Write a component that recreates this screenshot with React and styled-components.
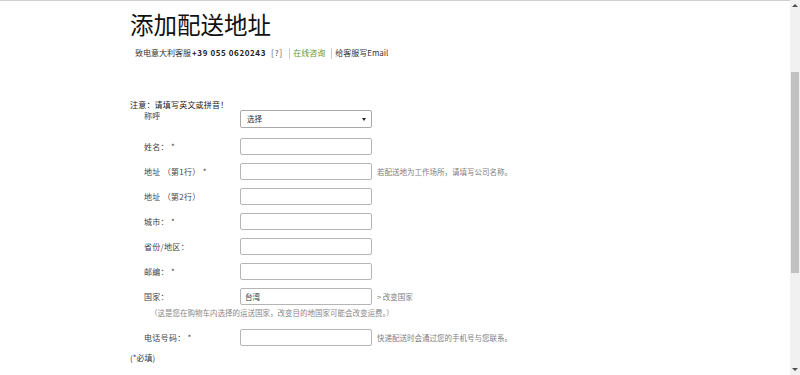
import React from 'react';
import styled, { createGlobalStyle } from 'styled-components';

const GlobalStyle = createGlobalStyle`
  html, body {
    margin: 0;
    padding: 0;
    overflow: hidden;
    background: #fff;
  }
  body {
    font-family: "Noto Sans CJK SC", "Noto Sans", "Liberation Sans", sans-serif;
    color: #333;
  }
`;

const Page = styled.div`
  display: flex;
  width: 800px;
  height: 375px;
`;

const Main = styled.div`
  flex: 1;
  border-top: 1px solid #cfcfcf;
  padding-left: 130px;
  box-sizing: border-box;
`;

const Title = styled.h1`
  margin: 8px 0 0;
  font-size: 23.5px;
  line-height: 30px;
  font-weight: 400;
  color: #111;
`;

const Contact = styled.div`
  display: flex;
  align-items: center;
  margin: 8px 0 0 5px;
  font-size: 8px;
  line-height: 12px;
  color: #333;
`;

const Phone = styled.b`
  font-weight: 700;
  color: #222;
  letter-spacing: 0.6px;
  margin-left: 1px;
`;

const Help = styled.span`
  margin-left: 5px;
  color: #555;
  letter-spacing: 1px;
`;

const LinkItem = styled.span`
  display: flex;
  align-items: center;
  margin-left: 6px;
  padding-left: 3px;
  border-left: 1px solid #ccc;
  height: 11px;
  color: ${p => (p.$green ? '#5e9b38' : '#333')};
`;

const Form = styled.div`
  margin-top: 40px;
  font-size: 8px;
  line-height: 12px;
`;

const Note = styled.div`
  color: #222;
  letter-spacing: 0.2px;
`;

const Row = styled.div`
  display: flex;
  align-items: ${p => (p.$top ? 'flex-start' : 'center')};
  margin-top: ${p => p.$mt}px;
  padding-left: 14px;
`;

const Label = styled.div`
  width: 96px;
  color: #444;
  letter-spacing: 0.3px;
  margin-top: ${p => p.$mt || 0}px;
`;

const Input = styled.div`
  box-sizing: border-box;
  width: 132px;
  height: ${p => p.$h || 17}px;
  border: 1px solid #b5b5b5;
  border-radius: 2px;
  background: #fff;
  display: flex;
  align-items: center;
  padding: 0 4px;
  color: #333;
  font-size: 7.5px;
`;

const SelectBox = styled(Input)`
  justify-content: space-between;
  border-color: #a9a9a9;
  padding: 0 5px 0 6px;
`;

const Arrow = styled.span`
  width: 0;
  height: 0;
  border-left: 2px solid transparent;
  border-right: 2px solid transparent;
  border-top: 3px solid #222;
`;

const Hint = styled.div`
  margin-left: 5px;
  color: #808080;
  font-size: 7.5px;
`;

const SubNote = styled.div`
  margin: 2px 0 0 20px;
  color: #888;
  font-size: 7.5px;
`;

const Required = styled.div`
  margin-top: 6px;
  color: #333;
`;

const Scrollbar = styled.div`
  width: 10px;
  background: #f1f1f1;
  display: flex;
  flex-direction: column;
  align-items: center;
`;

const ScrollArrow = styled.div`
  width: 0;
  height: 0;
  margin: ${p => (p.$down ? 'auto 0 4px' : '4px 0 0')};
  border-left: 3px solid transparent;
  border-right: 3px solid transparent;
  ${p => (p.$down ? 'border-top: 3px solid #505050;' : 'border-bottom: 3px solid #505050;')}
`;

const Thumb = styled.div`
  width: 8px;
  height: 201px;
  margin-top: 65px;
  background: #c1c1c1;
`;

const fields = [
  { label: '姓名： *', mt: 10 },
  { label: '地址 （第1行） *', mt: 8, hint: '若配送地为工作场所，请填写公司名称。' },
  { label: '地址 （第2行）', mt: 8 },
  { label: '城市： *', mt: 8 },
  { label: '省份/地区：', mt: 8 },
  { label: '邮编： *', mt: 8 },
];

export default function App() {
  return (
    <>
      <GlobalStyle />
      <Page>
        <Main>
          <Title>添加配送地址</Title>
          <Contact>
            <span>致电意大利客服</span>
            <Phone>+39 055 0620243</Phone>
            <Help>[?]</Help>
            <LinkItem $green>在线咨询</LinkItem>
            <LinkItem>给客服写Email</LinkItem>
          </Contact>
          <Form>
            <Note>注意：请填写英文或拼音！</Note>
            <Row $mt={-1} $top>
              <Label $mt={0}>称呼</Label>
              <SelectBox $h={18}>
                <span>选择</span>
                <Arrow />
              </SelectBox>
            </Row>
            {fields.map(f => (
              <Row key={f.label} $mt={f.mt}>
                <Label>{f.label}</Label>
                <Input />
                {f.hint && <Hint>{f.hint}</Hint>}
              </Row>
            ))}
            <Row $mt={8}>
              <Label>国家：</Label>
              <Input>台湾</Input>
              <Hint>&gt; 改变国家</Hint>
            </Row>
            <SubNote>（这是您在购物车内选择的运送国家，改变目的地国家可能会改变运费。）</SubNote>
            <Row $mt={10}>
              <Label>电话号码： *</Label>
              <Input />
              <Hint>快递配送时会通过您的手机号与您联系。</Hint>
            </Row>
            <Required>(*必填)</Required>
          </Form>
        </Main>
        <Scrollbar>
          <ScrollArrow />
          <Thumb />
          <ScrollArrow $down />
        </Scrollbar>
      </Page>
    </>
  );
}
